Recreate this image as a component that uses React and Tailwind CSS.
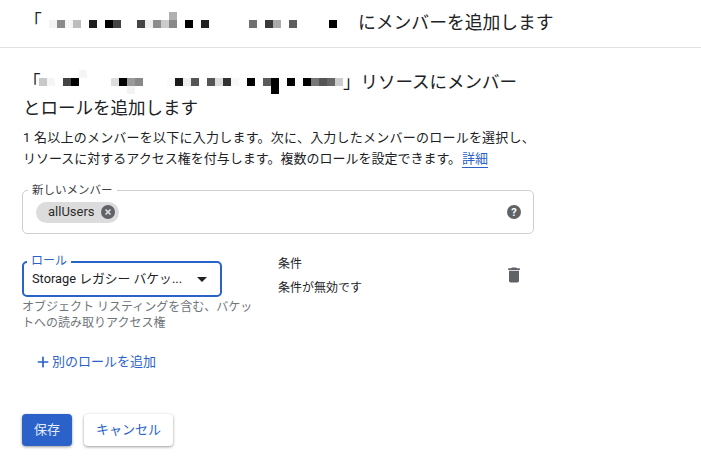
import React from 'react';
import { Plus } from 'lucide-react';

// redacted names from the screenshot: one class per 8px cell, '' means empty
const headerCells = [
    'bg-[#f3f3f3]', 'bg-[#8a8a8a]', 'bg-[#f5f5f5]', 'bg-[#bdbdbd]', '', 'bg-[#1e1e1e]', '', 'bg-[#000]', 'bg-[#444]', '', '',
    'bg-[#444]', 'bg-[#eee]', 'bg-[#8c8c8c]', 'bg-[#ccc]', 'bg-[#888]', '', 'bg-[#000]', '', 'bg-[#222]', '', '', '', '', '',
    'bg-[#707070]', '', 'bg-[#3a3a3a]', 'bg-[#aaa]', '', 'bg-[#5e5e5e]', '', '', '', '', 'bg-[#000]',
];

const resourceCells = [
    'bg-[#c8c8c8]', 'bg-[#f5f5f5]', '', 'bg-[#444]', 'bg-[#000]', '', '', '', '', 'bg-[#ddd]', 'bg-[#000]', 'bg-[#999]', 'bg-[#888]',
    '', '', '', 'bg-[#fafafa]', 'bg-[#1a1a1a]', 'bg-[#eee]', 'bg-[#555]', '', 'bg-[#555]', 'bg-[#ddd]', 'bg-[#333]', 'bg-[#f8f8f8]', '',
    'bg-[#000]', '', 'bg-[#5a5a5a]', 'bg-[#000]', '', 'bg-[#000]', '', 'bg-[#000]', 'bg-[#777]', 'bg-[#555]', 'bg-[#666]', 'bg-[#ccc]',
];

const Mosaic = ({ cells, extras = {} }) => (
    <span className="inline-flex h-2 align-middle">
        {cells.map((cell, i) => (
            <span key={i} className={`relative block w-2 h-2 ${cell}`}>
                {extras[i]}
            </span>
        ))}
    </span>
);

const App = () => {
    return (
        <div className="w-[701px] h-[457px] overflow-hidden bg-white text-[#202124] font-['Roboto','Noto_Sans_CJK_JP',sans-serif]">
            <div className="h-[48px] border-b border-[#e2e2e2] flex items-center pl-[24px] text-[17.8px]">
                <span className="w-[25px] self-start mt-[9px]">「</span>
                <Mosaic
                    cells={headerCells}
                    extras={{ 15: <span className="absolute left-0 -top-2 block w-2 h-2 bg-[#b0b0b0]" /> }}
                />
                <span className="ml-[21px]">にメンバーを追加します</span>
            </div>

            <div className="pl-[22px]">
                <div className="mt-[21px] text-[17.5px] leading-[26px] pl-[1px]">
                    <div className="flex items-center">
                        <span className="w-[16px] whitespace-nowrap">「</span>
                        <Mosaic
                            cells={resourceCells}
                            extras={{
                                5: <span className="absolute left-0 -top-2 block w-2 h-2 bg-[#f5f5f5]" />,
                                11: <span className="absolute left-0 top-2 block w-2 h-2 bg-[#f3f3f3]" />,
                                29: <span className="absolute left-0 top-2 block w-2 h-2 bg-[#000]" />,
                            }}
                        />
                        <span>」リソースにメンバー</span>
                    </div>
                    <div>とロールを追加します</div>
                </div>

                <p className="mt-[6px] text-[13px] leading-[21px] pl-[1px] w-[530px]">
                    <span className="tracking-[0.23px]">1 名以上のメンバーを以下に入力します。次に、入力したメンバーのロールを選択し、</span>
                    <br />
                    リソースに対するアクセス権を付与します。複数のロールを設定できます。
                    <a className="ml-[1px] text-[#2a62c9] border-b border-[#2a62c9] pb-[1px]">詳細</a>
                </p>

                {/* new member field */}
                <div className="relative mt-[21px] w-[512px] h-[44px] border border-[#cfcfcf] rounded-[5px] flex items-center justify-between pl-[13px] pr-[11px]">
                    <span className="absolute -top-[9px] left-[5px] bg-white px-[4px] text-[11.5px] leading-[16px] text-[#3c4043]">
                        新しいメンバー
                    </span>
                    <span className="h-[21px] pl-[12px] pr-[3px] rounded-full bg-[#dcdcdc] flex items-center gap-[5px] text-[13px] text-[#2c2c2c]">
                        allUsers
                        <svg width="16" height="16" viewBox="0 0 16 16">
                            <circle cx="8" cy="8" r="7" fill="#5f6368" />
                            <path d="M5.5 5.5l5 5M10.5 5.5l-5 5" stroke="#dcdcdc" strokeWidth="1.7" />
                        </svg>
                    </span>
                    <svg width="16" height="16" viewBox="0 0 16 16">
                        <circle cx="8" cy="8" r="7" fill="#5f6368" />
                        <text x="8" y="12" textAnchor="middle" fontSize="11" fontWeight="700" fill="#fff" fontFamily="Roboto">?</text>
                    </svg>
                </div>

                {/* role row */}
                <div className="mt-[27px] flex">
                    <div className="w-[256px]">
                        <div className="relative w-[200px] h-[36px] border-2 border-[#2a62c9] rounded-[5px] flex items-center pl-[8px] text-[12.8px]">
                            <span className="absolute -top-[10px] left-[3px] bg-white px-[4px] text-[12px] leading-[16px] text-[#2a62c9]">
                                ロール
                            </span>
                            <span className="w-[155px] whitespace-nowrap overflow-hidden">Storage レガシー バケッ...</span>
                            <span className="ml-[10px] w-0 h-0 border-l-[5px] border-r-[5px] border-t-[5px] border-l-transparent border-r-transparent border-t-[#202124]" />
                        </div>
                        <p className="mt-[2px] w-[232px] text-[12px] leading-[16px] text-[#70757a]">
                            オブジェクト リスティングを含む、バケットへの読み取りアクセス権
                        </p>
                    </div>
                    <div className="text-[12px] leading-[24px] w-[226px] -mt-[9px]">
                        <div>条件</div>
                        <div>条件が無効です</div>
                    </div>
                    <svg width="20" height="20" viewBox="0 0 24 24" className="mt-[4px]" fill="#5f6368">
                        <path d="M6 19c0 1.1.9 2 2 2h8c1.1 0 2-.9 2-2V7H6v12zM19 4h-3.5l-1-1h-5l-1 1H5v2h14V4z" />
                    </svg>
                </div>

                <div className="mt-[21px] pl-[13px] flex items-center text-[13px] text-[#2a62c9]">
                    <Plus size={16} strokeWidth={2.5} />
                    <span className="ml-[1px]">別のロールを追加</span>
                </div>

                <div className="mt-[42px] flex gap-[12px] text-[13px]">
                    <button className="w-[50px] h-[32px] rounded-[4px] bg-[#2a62c9] text-[#e3eafa] shadow-[0_1px_3px_rgba(0,0,0,0.4)]">保存</button>
                    <button className="w-[89px] h-[32px] rounded-[4px] bg-white text-[#2a62c9] shadow-[0_1px_3px_rgba(0,0,0,0.4)]">キャンセル</button>
                </div>
            </div>
        </div>
    );
};

export default App;
